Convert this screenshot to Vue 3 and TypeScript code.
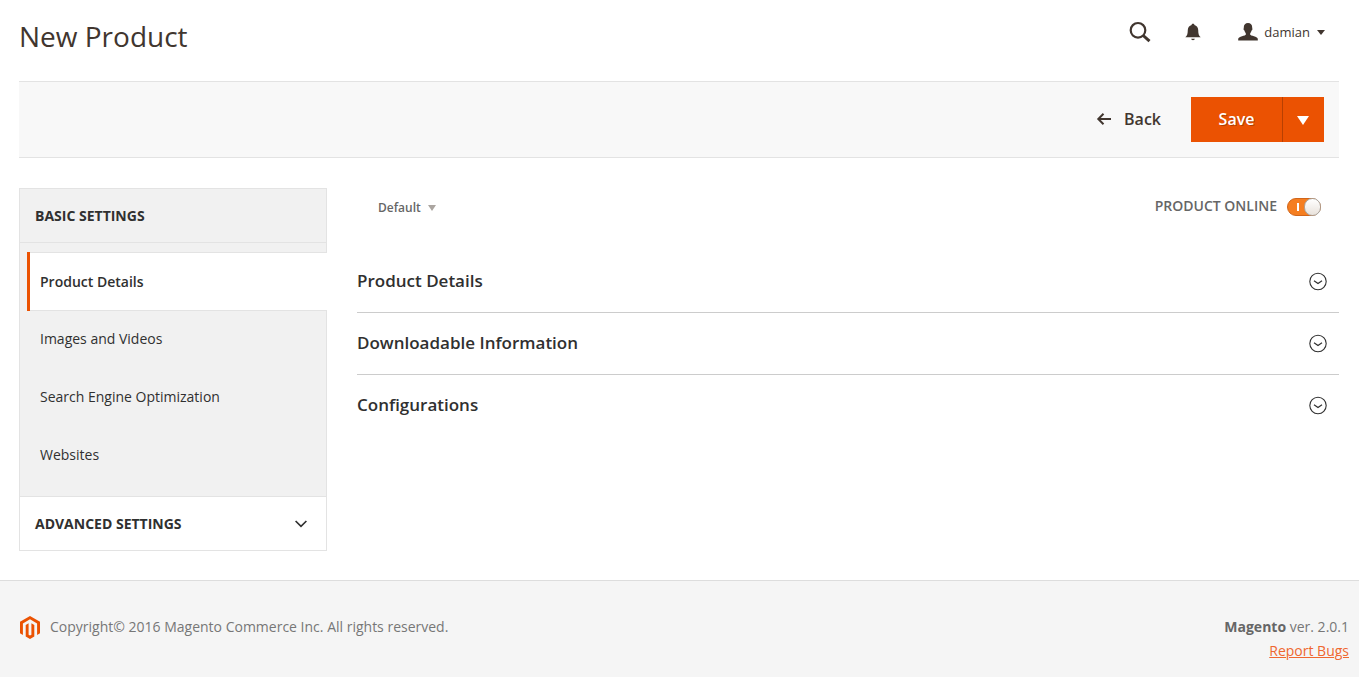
<script setup lang="ts">
import { ref } from 'vue'

interface NavItem {
  id: string
  label: string
}

const basicItems: NavItem[] = [
  { id: 'product-details', label: 'Product Details' },
  { id: 'images-videos', label: 'Images and Videos' },
  { id: 'seo', label: 'Search Engine Optimization' },
  { id: 'websites', label: 'Websites' },
]

const sections: string[] = ['Product Details', 'Downloadable Information', 'Configurations']

const activeItem = ref('product-details')
const online = ref(true)
</script>

<template>
  <div class="page">
    <header class="header">
      <h1 class="title">New Product</h1>
      <div class="tools">
        <button class="tool" type="button" aria-label="Search">
          <svg class="icon-search" viewBox="0 0 22 22" aria-hidden="true">
            <circle cx="9" cy="9.300" r="7.300" fill="none" stroke="currentColor" stroke-width="2.200" />
            <path d="M14.200 14.500l6.300 5.700" fill="none" stroke="currentColor" stroke-width="3" />
          </svg>
        </button>
        <button class="tool" type="button" aria-label="Notifications">
          <svg class="icon-bell" viewBox="0 0 16 18" aria-hidden="true">
            <path
              d="M8 .8c.9 0 1.400.5 1.400 1.200 2.300.7 3.700 2.500 3.800 5 .1 3.600.5 5.700 2.500 7.300H.3C2.300 12.700 2.700 10.600 2.800 7c.1-2.500 1.500-4.300 3.800-5C6.600 1.300 7.100.8 8 .8zM6.200 15.800h3.600c-.2 1-.8 1.400-1.800 1.400s-1.600-.4-1.800-1.400z"
              fill="currentColor"
            />
          </svg>
        </button>
        <button class="account" type="button">
          <svg class="icon-user" viewBox="0 0 20 18" aria-hidden="true">
            <path
              d="M10 0c2.600 0 4.200 1.700 4.200 4.200 0 .5 0 .8-.1 1.100.6.200.5 1.200 0 1.700-.2.300-.3.500-.5.600-.3 1.200-.8 2-1.400 2.600v1.600c1.300 1 3.300 1.300 5.200 2 1.400.5 2.300 1.200 2.400 2.200v1.500H.2V16c.1-1 1-1.700 2.400-2.200 1.900-.7 3.900-1 5.200-2v-1.600c-.6-.6-1.100-1.400-1.400-2.600-.2-.1-.3-.3-.5-.6-.5-.5-.6-1.500 0-1.700-.1-.3-.1-.6-.1-1.100C5.800 1.700 7.400 0 10 0z"
              fill="currentColor"
            />
          </svg>
          <span>damian</span>
          <svg class="caret" viewBox="0 0 8 5" aria-hidden="true"><path d="M0 0h8L4 5z" fill="currentColor" /></svg>
        </button>
      </div>
    </header>

    <div class="toolbar">
      <button class="back" type="button">
        <svg class="icon-back" viewBox="0 0 14 12" aria-hidden="true">
          <path d="M14 6H1.500M6.500.8L1.300 6l5.200 5.200" fill="none" stroke="currentColor" stroke-width="2" />
        </svg>
        <span>Back</span>
      </button>
      <div class="save-group">
        <button class="save" type="button">Save</button>
        <button class="save-more" type="button" aria-label="More save options">
          <svg class="save-caret" viewBox="0 0 12 9" aria-hidden="true"><path d="M0 0h12L6 9z" fill="currentColor" /></svg>
        </button>
      </div>
    </div>

    <div class="columns">
      <nav class="sidebar" aria-label="Product settings">
        <div class="group-title">BASIC SETTINGS</div>
        <ul class="nav-list">
          <li v-for="item in basicItems" :key="item.id">
            <a
              href="#"
              class="nav-link"
              :class="{ active: item.id === activeItem }"
              @click.prevent="activeItem = item.id"
              >{{ item.label }}</a
            >
          </li>
        </ul>
        <button class="advanced" type="button">
          <span>ADVANCED SETTINGS</span>
          <svg class="icon-down" viewBox="0 0 12 8" aria-hidden="true">
            <path d="M.6 1L6 6.300 11.400 1" fill="none" stroke="currentColor" stroke-width="1.700" />
          </svg>
        </button>
      </nav>

      <main class="content">
        <div class="options">
          <button class="set-switch" type="button">
            <span>Default</span>
            <svg class="caret muted" viewBox="0 0 8 6" aria-hidden="true"><path d="M0 0h8L4 6z" fill="currentColor" /></svg>
          </button>
          <label class="online">
            <span class="online-label">PRODUCT ONLINE</span>
            <input v-model="online" class="toggle-input" type="checkbox" />
            <span class="toggle" :class="{ on: online }" aria-hidden="true"></span>
          </label>
        </div>

        <button v-for="name in sections" :key="name" class="section" type="button">
          <span>{{ name }}</span>
          <svg class="icon-expand" viewBox="0 0 18 18" aria-hidden="true">
            <circle cx="9" cy="9.500" r="8.200" fill="none" stroke="currentColor" stroke-width="1.100" />
            <path d="M5 8.800l4 2.800 4-2.800" fill="none" stroke="currentColor" stroke-width="1.200" />
          </svg>
        </button>
      </main>
    </div>

    <footer class="footer">
      <div class="copyright">
        <svg class="logo" viewBox="0 0 20 23" aria-hidden="true">
          <path
            d="M10 0l10 5.700v11.500l-2.900 1.700V7.400L10 3.300 2.900 7.400v11.500L0 17.200V5.700zM5.700 9l2.900-1.700v11.500l1.400.8 1.400-.8V7.300L14.300 9v11.500L10 23l-4.300-2.500z"
            fill="#eb5202"
          />
        </svg>
        <span>Copyright© 2016 Magento Commerce Inc. All rights reserved.</span>
      </div>
      <div class="version">
        <div><strong>Magento</strong> ver. 2.0.1</div>
        <a href="#">Report Bugs</a>
      </div>
    </footer>
  </div>
</template>

<style>
body {
  margin: 0;
  background: #fff;
}
</style>

<style scoped>
.page {
  display: flex;
  flex-direction: column;
  min-height: 100vh;
  color: #303030;
  font: 400 14px/20px 'Open Sans', 'Noto Sans', sans-serif;
}

button {
  margin: 0;
  padding: 0;
  border: 0;
  background: none;
  color: inherit;
  font: inherit;
  cursor: pointer;
}

svg {
  display: block;
  flex: none;
  overflow: visible;
}

.header {
  display: flex;
  justify-content: space-between;
  align-items: flex-start;
  height: 81px;
  padding: 0 34px 0 19px;
  color: #41362f;
}

.title {
  margin: 17px 0 0;
  font-size: 28px;
  line-height: 38px;
  font-weight: 400;
}

.tools {
  display: flex;
  align-items: center;
  height: 64px;
}

.tool {
  margin-right: 34px;
}

.icon-search {
  width: 22px;
  height: 22px;
}

.icon-bell {
  width: 16px;
  height: 18px;
}

.account {
  display: flex;
  align-items: center;
  margin-left: 3px;
  font-size: 13px;
}

.icon-user {
  width: 20px;
  height: 18px;
  margin-right: 6px;
}

.caret {
  width: 8px;
  height: 5px;
  margin-left: 7px;
}

.toolbar {
  display: flex;
  justify-content: flex-end;
  align-items: center;
  margin: 0 20px 0 19px;
  padding: 15px;
  border-top: 1px solid #e3e3e3;
  border-bottom: 1px solid #e3e3e3;
  background: #f8f8f8;
}

.back {
  display: flex;
  align-items: center;
  gap: 13px;
  margin-right: 30px;
  padding-bottom: 2px;
  color: #41362f;
  font-size: 16px;
  font-weight: 600;
}

.icon-back {
  width: 14px;
  height: 12px;
}

.save-group {
  display: flex;
  height: 45px;
  background: #eb5202;
  color: #fff;
}

.save {
  width: 91px;
  padding-bottom: 2px;
  font-size: 16px;
  font-weight: 600;
  text-shadow: 1px 1px 0 rgba(0, 0, 0, 0.25);
}

.save-more {
  display: flex;
  align-items: center;
  justify-content: center;
  width: 42px;
  padding: 2px 2px 0 0;
  border-left: 1px solid #b84002;
}

.save-caret {
  width: 12px;
  height: 9px;
}

.columns {
  display: flex;
  align-items: flex-start;
  gap: 30px;
  margin: 30px 20px 29px 19px;
}

.sidebar {
  box-sizing: border-box;
  flex: none;
  width: 308px;
  border: 1px solid #e3e3e3;
  background: #f1f1f1;
}

.group-title {
  padding: 17px 15px 16px;
  border-bottom: 1px solid #e3e3e3;
  font-weight: 700;
}

.nav-list {
  margin: 0;
  padding: 9px 0 11px;
  list-style: none;
}

.nav-link {
  display: block;
  padding: 18px 20px 20px;
  color: inherit;
  text-decoration: none;
}

.nav-link.active {
  margin: 0 -1px 0 7px;
  padding: 18px 10px;
  padding-top: 19px;
  border: 1px solid #e3e3e3;
  border-width: 1px 0;
  background: #fff;
  box-shadow: -3px 0 0 #eb5202;
  margin-left: 10px;
  font-weight: 600;
}

.advanced {
  display: flex;
  align-items: center;
  justify-content: space-between;
  width: 100%;
  padding: 17px 19px 16px 15px;
  border-top: 1px solid #e3e3e3;
  background: #fff;
  font-weight: 700;
}

.icon-down {
  width: 12px;
  height: 8px;
}

.content {
  flex: 1;
  min-width: 0;
}

.options {
  display: flex;
  align-items: center;
  justify-content: space-between;
  height: 38px;
  padding: 0 18px 0 21px;
  margin-bottom: 25px;
  color: #666;
  font-weight: 600;
}

.set-switch {
  display: flex;
  align-items: center;
  padding-top: 2px;
  font-size: 12px;
}

.muted {
  height: 6px;
  color: #aba5a0;
}

.online {
  position: relative;
  display: flex;
  align-items: center;
  gap: 10px;
  cursor: pointer;
}

.online-label {
  padding-bottom: 2px;
}

.toggle-input {
  position: absolute;
  right: 0;
  width: 34px;
  height: 18px;
  margin: 0;
  opacity: 0;
}

.toggle {
  box-sizing: border-box;
  display: flex;
  align-items: center;
  width: 34px;
  height: 18px;
  border: 1px solid #aaa6a0;
  border-radius: 9px;
  background: #eee;
}

.toggle.on {
  justify-content: flex-end;
  border-color: #d1651a;
  background: #f57e20;
}

.toggle.on::before {
  content: '';
  width: 2px;
  height: 8px;
  margin-right: 5px;
  background: #fff;
}

.toggle::after {
  content: '';
  box-sizing: border-box;
  width: 17px;
  height: 18px;
  margin-right: -1px;
  border: 1px solid #aaa6a0;
  border-radius: 9px;
  background: linear-gradient(#fff, #e9e2db);
}

.section {
  display: flex;
  align-items: center;
  justify-content: space-between;
  width: 100%;
  padding: 18px 12px 19px 0;
  border-bottom: 1px solid #ccc;
  font-size: 17px;
  line-height: 24px;
  font-weight: 600;
}

.section:last-child {
  border-bottom: 0;
}

.icon-expand {
  width: 18px;
  height: 18px;
}

.footer {
  display: flex;
  flex: 1;
  align-items: flex-start;
  justify-content: space-between;
  padding: 34px 10px 14px 20px;
  border-top: 1px solid #ddd;
  background: #f5f5f5;
  color: #777;
  line-height: 24px;
}

.copyright {
  display: flex;
  align-items: center;
  gap: 10px;
}

.logo {
  width: 20px;
  height: 23px;
}

.version {
  text-align: right;
}

.version strong {
  color: #666;
}

.version a {
  color: #ef672f;
}
</style>
